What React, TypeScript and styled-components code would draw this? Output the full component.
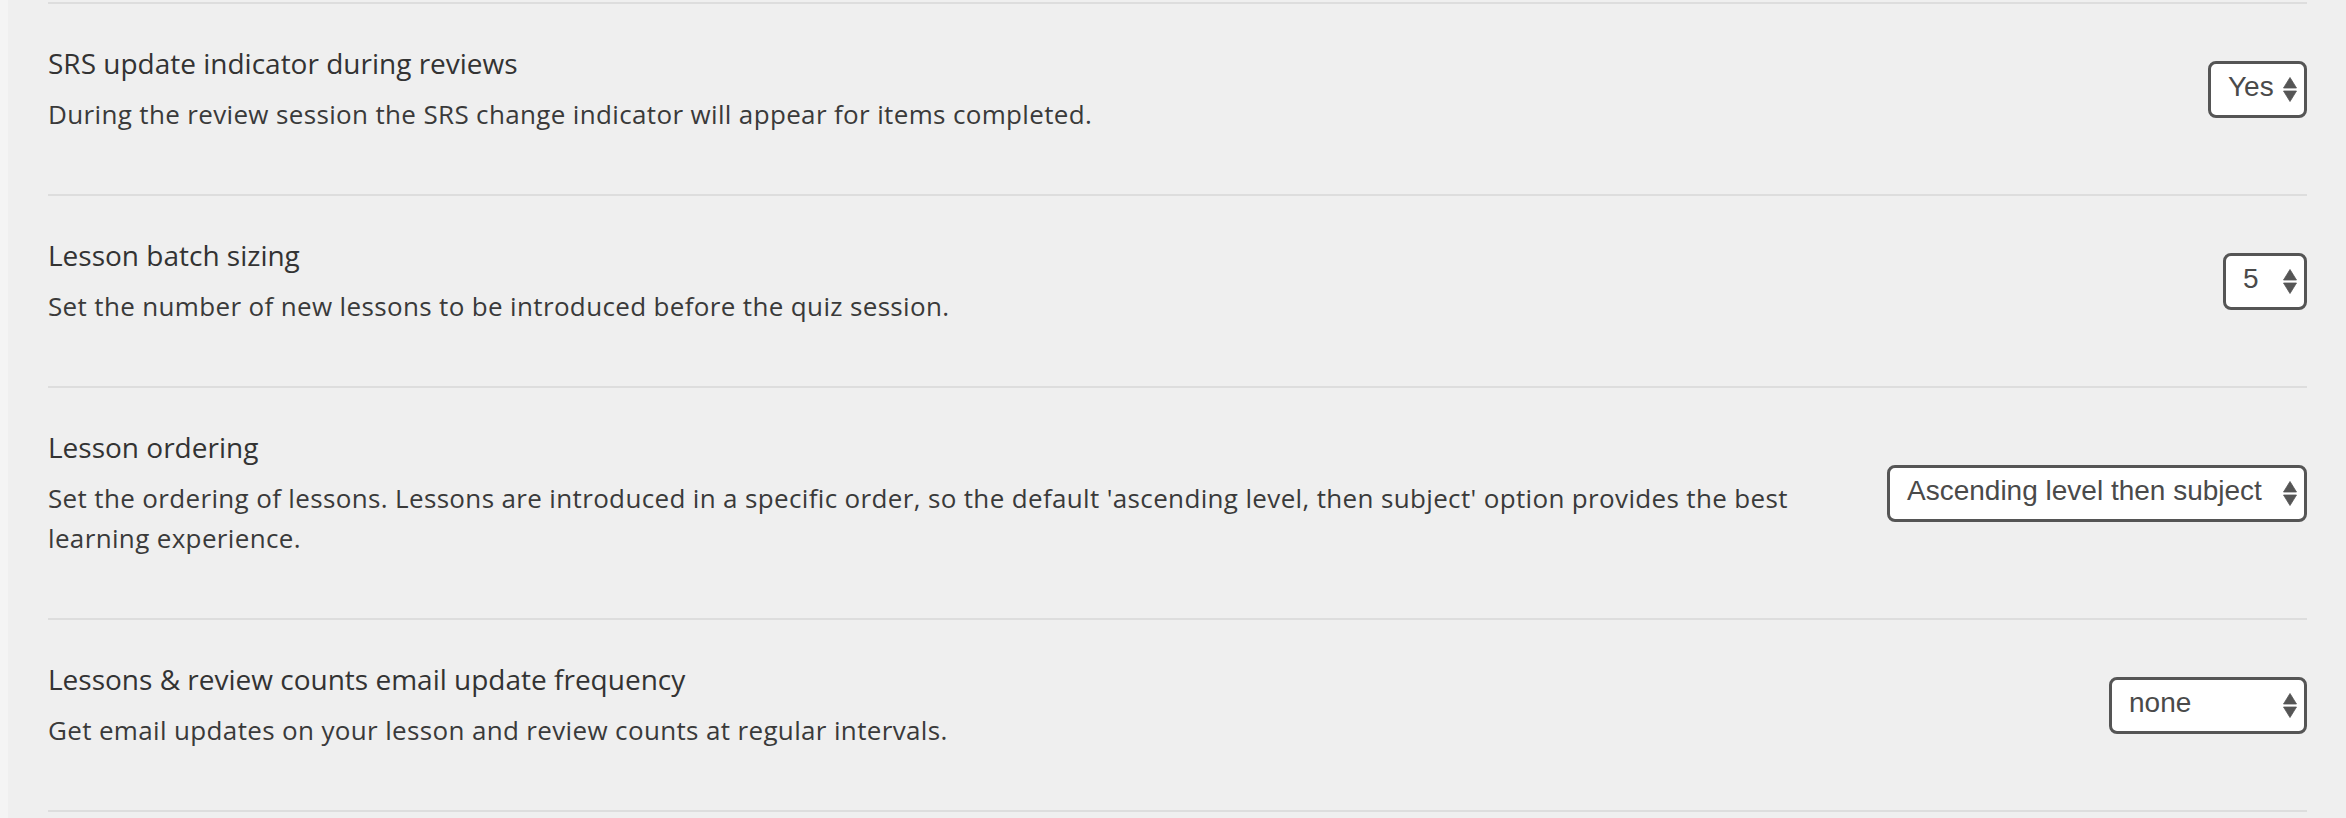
import React from "react";
import styled, { createGlobalStyle } from "styled-components";

const GlobalStyle = createGlobalStyle`
  html, body {
    margin: 0;
    padding: 0;
    background: #f4f4f4;
  }
  body {
    font-family: "Open Sans", "Noto Sans", sans-serif;
    -webkit-font-smoothing: antialiased;
  }
`;

const Page = styled.div`
  margin-left: 8px;
  min-height: 818px;
  background: #efefef;
  padding: 2px 39px 0 40px;
  box-sizing: border-box;
`;

const List = styled.div`
  border-bottom: 2px solid #dddddd;
`;

const Row = styled.div`
  display: flex;
  align-items: center;
  gap: 48px;
  border-top: 2px solid #dddddd;
  padding: 40px 0 60px;
`;

const Info = styled.div`
  flex: 1;
  min-width: 0;
`;

const Title = styled.div`
  font-size: 28px;
  line-height: 38px;
  color: #333333;
  font-weight: 400;
`;

const Description = styled.div`
  margin-top: 12px;
  font-size: 26px;
  line-height: 40px;
  letter-spacing: 0.35px;
  color: #3a3a3a;
  font-weight: 400;
`;

const Select = styled.div<{ $width: number }>`
  flex: none;
  box-sizing: border-box;
  width: ${(p) => p.$width}px;
  height: 57px;
  display: inline-flex;
  align-items: center;
  justify-content: space-between;
  padding: 0 7px 4px 17px;
  border: 3px solid #555555;
  border-radius: 8px;
  background: #ffffff;
  font-family: "Liberation Sans", Arial, sans-serif;
  font-size: 28px;
  color: #4a4a4a;
  white-space: nowrap;
`;

const Arrows = styled.svg`
  flex: none;
  width: 14px;
  height: 25px;
  margin-top: 4px;
`;

const SelectArrows = () => (
  <Arrows viewBox="0 0 14 25">
    <polygon points="7,0.5 13.5,11 0.5,11" fill="#555555" strokeLinejoin="round" stroke="#555555" strokeWidth="0.8" />
    <polygon points="0.5,14 13.5,14 7,24.5" fill="#555555" strokeLinejoin="round" stroke="#555555" strokeWidth="0.8" />
  </Arrows>
);

type Setting = {
  title: string;
  description: string;
  value: string;
  width: number;
};

const settings: Setting[] = [
  {
    title: "SRS update indicator during reviews",
    description:
      "During the review session the SRS change indicator will appear for items completed.",
    value: "Yes",
    width: 99,
  },
  {
    title: "Lesson batch sizing",
    description: "Set the number of new lessons to be introduced before the quiz session.",
    value: "5",
    width: 84,
  },
  {
    title: "Lesson ordering",
    description:
      "Set the ordering of lessons. Lessons are introduced in a specific order, so the default 'ascending level, then subject' option provides the best learning experience.",
    value: "Ascending level then subject",
    width: 420,
  },
  {
    title: "Lessons & review counts email update frequency",
    description: "Get email updates on your lesson and review counts at regular intervals.",
    value: "none",
    width: 198,
  },
];

export default function App() {
  return (
    <>
      <GlobalStyle />
      <Page>
        <List>
          {settings.map((s) => (
            <Row key={s.title}>
              <Info>
                <Title>{s.title}</Title>
                <Description>{s.description}</Description>
              </Info>
              <Select $width={s.width}>
                <span>{s.value}</span>
                <SelectArrows />
              </Select>
            </Row>
          ))}
        </List>
      </Page>
    </>
  );
}
